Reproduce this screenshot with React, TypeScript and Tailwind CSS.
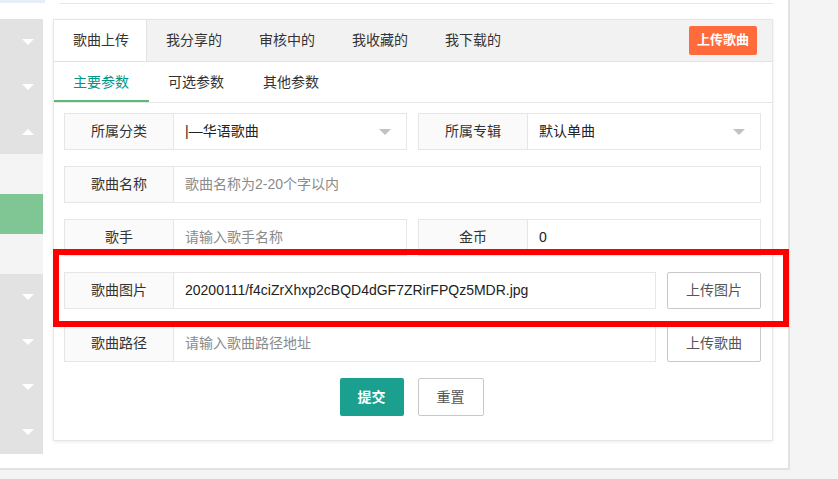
import React from "react";

const font = { fontFamily: '"Liberation Sans", "Noto Sans CJK SC", sans-serif' };

function Down() {
  return <div className="w-0 h-0 border-x-[6px] border-x-transparent border-t-[6px] border-t-white" />;
}
function Up() {
  return <div className="w-0 h-0 border-x-[6px] border-x-transparent border-b-[6px] border-b-white" />;
}

function NavItem({ up }: { up?: boolean }) {
  return (
    <div className="h-[45px] bg-[#e2e2e2] flex items-center justify-end pr-[9px]">
      {up ? <Up /> : <Down />}
    </div>
  );
}

function Label({ children }: { children: React.ReactNode }) {
  return (
    <div className="w-[110px] shrink-0 h-full bg-[#fafafa] border border-[#e6e6e6] flex items-center justify-center text-[14px] text-[#333]">
      {children}
    </div>
  );
}

function Field({ children, muted, caret }: { children: React.ReactNode; muted?: boolean; caret?: boolean }) {
  return (
    <div
      className={`flex-1 h-full border border-l-0 border-[#e6e6e6] flex items-center pl-[11px] pr-[15px] text-[14px] ${
        muted ? "text-[#8a8a8a]" : "text-[#222]"
      }`}
    >
      <span className="flex-1 whitespace-nowrap">{children}</span>
      {caret && <div className="w-0 h-0 border-x-[6px] border-x-transparent border-t-[6px] border-t-[#c2c2c2]" />}
    </div>
  );
}

function GhostBtn({ children, w }: { children: React.ReactNode; w: string }) {
  return (
    <div className={`${w} h-full shrink-0 border border-[#c9c9c9] rounded-[2px] bg-white flex items-center justify-center text-[14px] text-[#555]`}>
      {children}
    </div>
  );
}

export default function App() {
  const tabs = ["歌曲上传", "我分享的", "审核中的", "我收藏的", "我下载的"];
  const sub = ["主要参数", "可选参数", "其他参数"];
  return (
    <div className="w-[838px] h-[479px] bg-[#f4f4f4] relative overflow-hidden" style={font}>
      <div className="w-[790px] h-[470px] bg-white border-r-2 border-b-2 border-[#e2e2e2] flex">
        {/* sidebar */}
        <div className="w-[43px] shrink-0 flex flex-col">
          <div className="w-[45px] h-[3px] bg-[#e6eef9]" />
          <div className="h-[16px]" />
          <NavItem />
          <NavItem />
          <NavItem up />
          <div className="h-[40px] bg-[#f4f4f4]" />
          <div className="h-[40px] bg-[#80c694]" />
          <div className="h-[40px] bg-[#f4f4f4]" />
          <NavItem />
          <NavItem />
          <NavItem />
          <NavItem />
        </div>

        {/* content */}
        <div className="flex-1 pl-[10px]">
          <div className="ml-[7px] w-[713px] h-[4px] border-b border-[#e6e6e6]" />
          <div className="mt-[15px] w-[720px] h-[422px] border border-[#e6e6e6] shadow-[0_1px_3px_rgba(0,0,0,0.08)] bg-white flex flex-col">
            {/* top tabs */}
            <div className="h-[42px] bg-[#f2f2f2] border-b border-[#e2e2e2] flex items-stretch">
              {tabs.map((t, i) => (
                <div
                  key={t}
                  className={`w-[93px] flex items-center pl-[19px] text-[14px] text-[#333] ${
                    i === 0 ? "bg-white border-r border-[#e2e2e2]" : ""
                  }`}
                >
                  {t}
                </div>
              ))}
              <div className="flex-1" />
              <div className="self-center mr-[15px] mb-[1px] w-[68px] h-[29px] rounded-[2px] bg-[#ff6b3b] text-white text-[13px] font-bold flex items-center justify-center">
                上传歌曲
              </div>
            </div>
            {/* sub tabs */}
            <div className="h-[41px] border-b border-[#e6e6e6] flex items-stretch">
              {sub.map((t, i) => (
                <div
                  key={t}
                  className={`w-[95px] flex items-center pl-[19px] text-[14px] ${
                    i === 0 ? "text-[#009688] border-b-2 border-[#5fb878] pt-[2px]" : "text-[#333]"
                  }`}
                >
                  {t}
                </div>
              ))}
            </div>
            {/* form */}
            <div className="pl-[10px] pr-[11px] pt-[10px] flex flex-col gap-[16px]">
              <div className="h-[37px] flex gap-[11px]">
                <div className="flex-1 flex h-full">
                  <Label>所属分类</Label>
                  <Field caret>|—华语歌曲</Field>
                </div>
                <div className="flex-1 flex h-full">
                  <Label>所属专辑</Label>
                  <Field caret>默认单曲</Field>
                </div>
              </div>
              <div className="h-[37px] flex">
                <Label>歌曲名称</Label>
                <Field muted>歌曲名称为2-20个字以内</Field>
              </div>
              <div className="h-[37px] flex gap-[11px]">
                <div className="flex-1 flex h-full">
                  <Label>歌手</Label>
                  <Field muted>请输入歌手名称</Field>
                </div>
                <div className="flex-1 flex h-full">
                  <Label>金币</Label>
                  <Field>0</Field>
                </div>
              </div>
              <div className="h-[37px] flex gap-[11px]">
                <div className="flex-1 flex h-full">
                  <Label>歌曲图片</Label>
                  <Field>20200111/f4ciZrXhxp2cBQD4dGF7ZRirFPQz5MDR.jpg</Field>
                </div>
                <GhostBtn w="w-[94px]">上传图片</GhostBtn>
              </div>
              <div className="h-[37px] flex gap-[11px]">
                <div className="flex-1 flex h-full">
                  <Label>歌曲路径</Label>
                  <Field muted>请输入歌曲路径地址</Field>
                </div>
                <GhostBtn w="w-[94px]">上传歌曲</GhostBtn>
              </div>
              <div className="h-[38px] flex justify-center gap-[14px] pr-[2px]">
                <div className="w-[64px] h-full rounded-[2px] bg-[#1ba090] text-white text-[14px] font-bold flex items-center justify-center">
                  提交
                </div>
                <GhostBtn w="w-[66px]">重置</GhostBtn>
              </div>
            </div>
          </div>
        </div>
      </div>

      {/* red annotation */}
      <div className="absolute left-[53px] top-[249px] w-[736px] h-[78px] border-[6px] border-[#ff0000]" />
    </div>
  );
}
